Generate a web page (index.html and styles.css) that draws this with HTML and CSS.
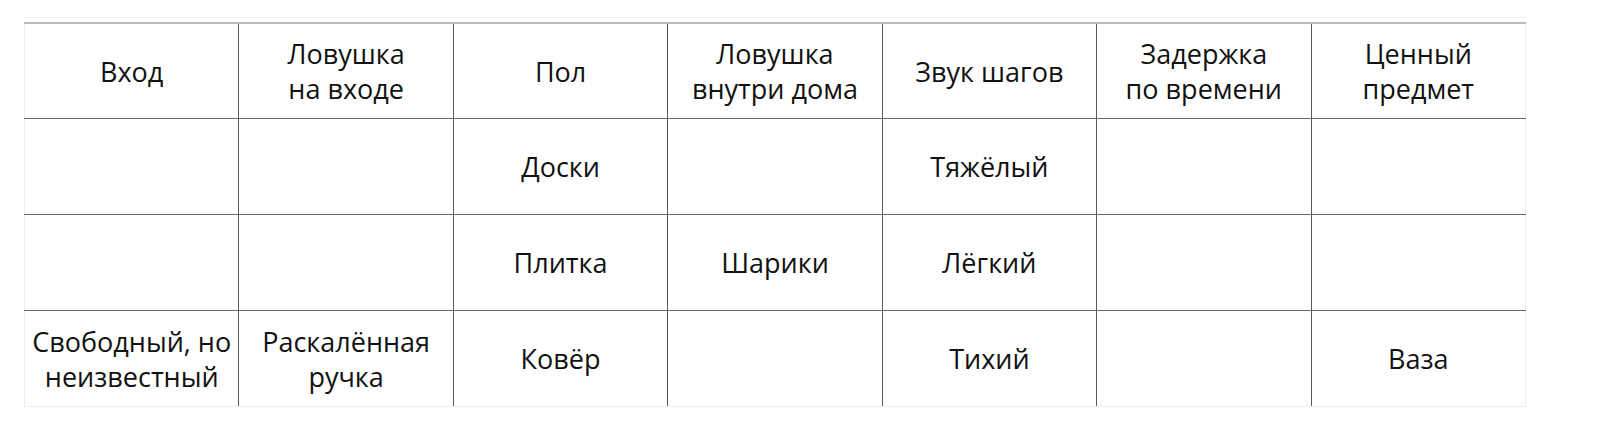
FILE: index.html
```html
<!DOCTYPE html>
<html lang="ru">
<head>
<meta charset="utf-8">
<link rel="stylesheet" href="styles.css">
</head>
<body>
<div class="frame">
<table class="grid">
<thead>
<tr><th>Вход</th><th>Ловушка<br>на входе</th><th>Пол</th><th>Ловушка<br>внутри дома</th><th>Звук шагов</th><th>Задержка<br>по времени</th><th>Ценный<br>предмет</th></tr>
</thead>
<tbody>
<tr><td></td><td></td><td>Доски</td><td></td><td>Тяжёлый</td><td></td><td></td></tr>
<tr><td></td><td></td><td>Плитка</td><td>Шарики</td><td>Лёгкий</td><td></td><td></td></tr>
<tr><td>Свободный, но неизвестный</td><td>Раскалённая ручка</td><td>Ковёр</td><td></td><td>Тихий</td><td></td><td>Ваза</td></tr>
</tbody>
</table>
</div>
</body>
</html>
```
FILE: styles.css
```css
html, body {
  margin: 0;
  padding: 0;
  background: #ffffff;
}
body {
  font-family: "Open Sans", "DejaVu Sans", sans-serif;
  color: #111111;
}
.frame {
  margin: 17px 0 0 24px;
  width: 1502px;
  border-top: 1px solid #f0f0f0;
  padding-top: 4px;
}
.grid {
  width: 1502px;
  border-collapse: collapse;
  table-layout: fixed;
  border-top: 2px solid #bdbdbd;
}
.grid th, .grid td {
  height: 95px;
  padding: 0 3px;
  font-size: 27px;
  font-weight: 400;
  line-height: 35px;
  text-align: center;
  vertical-align: middle;
  border-left: 1px solid #5a5a5a;
  border-bottom: 1px solid #6a6a6a;
}
.grid th {
  height: 94px;
}
.grid th:first-child, .grid td:first-child {
  border-left: 1px solid #eeeeee;
}
.grid th:last-child, .grid td:last-child {
  border-right: 1px solid #eeeeee;
}
.grid tbody tr:last-child td {
  border-bottom: 1px solid #eeeeee;
}
```
